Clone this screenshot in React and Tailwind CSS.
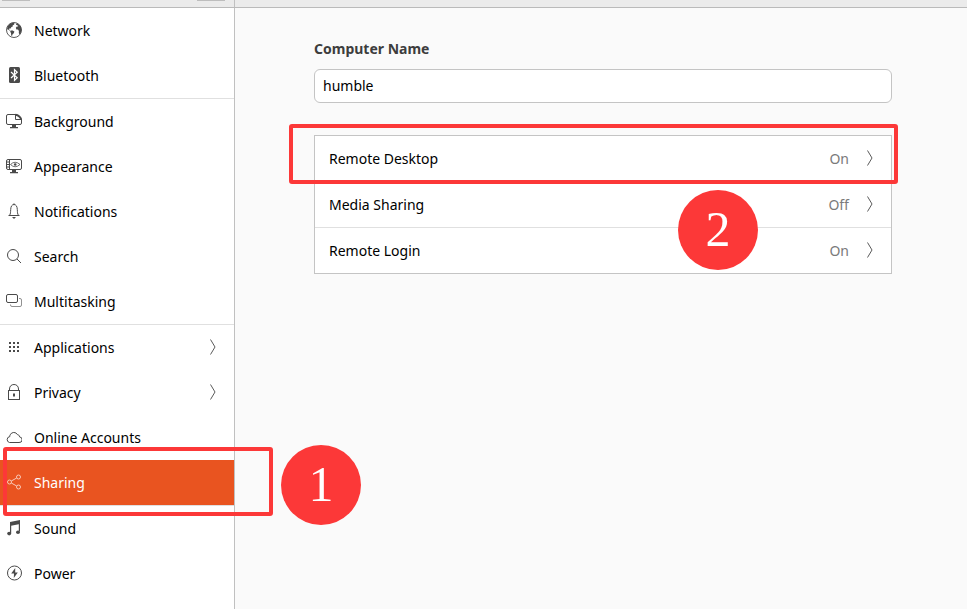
import React from "react";

function Glyph({ children }) {
  return (
    <svg
      className="mb-px size-4 shrink-0"
      viewBox="0 0 16 16"
      fill="none"
      stroke="currentColor"
      strokeWidth="1"
      aria-hidden="true"
    >
      {children}
    </svg>
  );
}

const icons = {
  network: (
    <Glyph>
      <circle cx="8" cy="8" r="7.5" strokeWidth="0.9" />
      <path
        stroke="none"
        fill="currentColor"
        d="M1.500 4.600 3.600 1.900 6.400.7 8.400 1 8.200 2.400 6.600 3.400 6.800 4.400 5.400 5 4.600 6.400 3.200 6.600 3 7.600 4.200 8.200 3.400 8.600 1.800 7.200 1 7.400ZM4.600 8.400 6.600 8.400 8.400 9.600 7.800 11.200 6.600 12.200 6 14 5.200 13.400 5 11 4.200 9.800ZM10.400 1.200 13 2.400 14.800 4.600 15.500 8 14.900 10.400 13.400 12.400 12.800 11 12.900 9 12 7.600 10.400 7.400 9.800 5.800 10.800 4.600 12.200 4.400 11.800 3.400 10 2.800Z"
      />
    </Glyph>
  ),
  bluetooth: (
    <Glyph>
      <rect x="3" y="0" width="11" height="16" rx="1.5" fill="currentColor" stroke="none" />
      <path stroke="#fff" strokeWidth="1.200" d="M5 5 11.200 10.800 8.500 13.400V2.600L11.200 5.200 5 11" />
    </Glyph>
  ),
  background: (
    <Glyph>
      <path d="M10 1.500H2A1.500 1.500 0 0 0 .5 3v7A1.500 1.500 0 0 0 2 11.500h12a1.500 1.500 0 0 0 1.500-1.500V6.500" />
      <path stroke="none" fill="currentColor" d="M6 12h4v2h2v1.200H4V14h2Z" />
      <path d="M9.500 1.500v5h6" />
      <path strokeWidth="2" d="M9.500 1.800C12.200 2 15 4.200 15.200 7" />
    </Glyph>
  ),
  appearance: (
    <Glyph>
      <path d="M2 1.500h12A1.500 1.500 0 0 1 15.500 3v7a1.500 1.500 0 0 1-1.500 1.500H2A1.500 1.500 0 0 1 .5 10V3A1.500 1.500 0 0 1 2 1.500ZM3.500 1.500v10M.5 4h3M.5 6.500h3M.5 9h3" />
      <path strokeWidth="0.800" d="M4.500 6.500Q9 2 14 6.500 9 11 4.500 6.500Z" />
      <circle cx="9.200" cy="6.500" r="1.300" fill="currentColor" stroke="none" />
      <path stroke="none" fill="currentColor" d="M6 12h4v2h2v1.200H4V14h2Z" />
    </Glyph>
  ),
  notifications: (
    <Glyph>
      <path d="M2.500 12.500h11M3.500 12.500c1.200-2 1-3.200 1.200-6C4.800 3.400 6 1.500 8 1.500s3.200 1.900 3.300 5c.2 2.800 0 4 1.200 6" />
      <path stroke="none" fill="currentColor" d="M7.400.5h1.200v1H7.400ZM6 14h4L8 16Z" />
    </Glyph>
  ),
  search: (
    <Glyph>
      <circle cx="7" cy="7" r="5.500" />
      <path d="m11 11 4 4" />
    </Glyph>
  ),
  multitasking: (
    <Glyph>
      <rect x=".5" y="1.500" width="11" height="8" rx="1.500" />
      <path opacity=".6" d="M13 5.500h1A1.500 1.500 0 0 1 15.500 7v5A1.500 1.500 0 0 1 14 13.500H6A1.500 1.500 0 0 1 4.500 12v-.5" />
    </Glyph>
  ),
  applications: (
    <Glyph>
      <path strokeWidth="2" strokeDasharray="2 2" d="M3 4h10M3 8h10M3 12h10" />
    </Glyph>
  ),
  privacy: (
    <Glyph>
      <rect x="2.500" y="6.500" width="11" height="9" />
      <path d="M3.500 6.500V5C3.500 2.200 5.500.5 8 .5S12.500 2.200 12.500 5v1.500" />
      <path strokeWidth="2" d="M8 9.500v3" />
    </Glyph>
  ),
  accounts: (
    <Glyph>
      <path d="M3.500 13.500h9.500a2.800 2.800 0 0 0 .6-5.600C13.300 6.300 12.400 5.600 11.400 5.600A4 4 0 0 0 4.200 5.800C3.700 6.600 3.700 7.200 3.800 7.600a3 3 0 0 0-.3 5.900Z" />
    </Glyph>
  ),
  sharing: (
    <Glyph>
      <circle cx="3.500" cy="8" r="2" />
      <circle cx="12.500" cy="3" r="2" />
      <circle cx="12.500" cy="13" r="2" />
      <path d="m5.300 7 5.400-3M5.300 9l5.400 3" />
    </Glyph>
  ),
  sound: (
    <Glyph>
      <path stroke="none" fill="currentColor" d="M4 2 14 0v4L5 5.800V13H4Z" />
      <path strokeWidth="1.200" d="M4.600 3v10M13.400 1v10.500" />
      <ellipse cx="3.200" cy="13.600" rx="2" ry="1.800" fill="currentColor" stroke="none" />
      <ellipse cx="12" cy="12.200" rx="2" ry="1.800" fill="currentColor" stroke="none" />
    </Glyph>
  ),
  power: (
    <Glyph>
      <circle cx="8.500" cy="8" r="7" />
      <path stroke="none" fill="currentColor" d="M9.200 3 5.200 8.600H8L7.800 13l4-5.600H9.200Z" />
    </Glyph>
  ),
};

const groups = [
  [
    ["network", "Network"],
    ["bluetooth", "Bluetooth"],
  ],
  [
    ["background", "Background"],
    ["appearance", "Appearance"],
    ["notifications", "Notifications"],
    ["search", "Search"],
    ["multitasking", "Multitasking"],
  ],
  [
    ["applications", "Applications", true],
    ["privacy", "Privacy", true],
    ["accounts", "Online Accounts"],
    ["sharing", "Sharing"],
  ],
  [
    ["sound", "Sound"],
    ["power", "Power"],
  ],
];

const services = [
  ["Remote Desktop", "On"],
  ["Media Sharing", "Off"],
  ["Remote Login", "On"],
];

function Chevron() {
  return (
    <svg className="mb-px h-4 w-2 shrink-0" viewBox="0 0 8 16" fill="none" stroke="#5a5a5a" aria-hidden="true">
      <path d="M1.500 .5 6 8l-4.500 7.500" />
    </svg>
  );
}

function Frame({ className }) {
  return (
    <span
      className={`pointer-events-none absolute z-10 rounded-[3px] border-4 border-[#fc3838] ${className}`}
    />
  );
}

function Step({ number, className }) {
  return (
    <span
      className={`pointer-events-none absolute z-10 flex size-20 items-center justify-center rounded-full bg-[#fc3838] font-['Liberation_Serif',serif] text-[50px] text-white ${className}`}
    >
      {number}
    </span>
  );
}

function NavItem({ icon, label, more }) {
  const active = icon === "sharing";
  return (
    <li className="relative">
      <a
        href={`#${icon}`}
        aria-current={active ? "page" : undefined}
        className={`flex h-[45px] items-center pr-[17px] pl-1.5 ${active ? "bg-[#e95420] text-white" : "bg-white text-black"}`}
      >
        <span className={`mr-3 ${active ? "text-[#f9c9b8]" : "text-[#4a4a4a]"}`}>{icons[icon]}</span>
        <span className="flex-1">{label}</span>
        {more && <Chevron />}
      </a>
      {active && (
        <>
          <Frame className="-top-[13px] left-[3px] h-[69px] w-[270px]" />
          <Step number="1" className="-top-[15px] left-[281px]" />
        </>
      )}
    </li>
  );
}

export default function App() {
  return (
    <div className="flex min-h-screen flex-col bg-[#fafafa] font-['Noto_Sans',sans-serif] text-sm text-black">
      <header className="flex h-2 border-b border-[#bababa] bg-[#ebebeb]">
        <div className="flex w-[235px] items-start justify-between border-r border-[#c0c0c0] pr-[9px] pl-0.5">
          <span className="h-px w-7 bg-[#bdbdbd]" />
          <span className="h-px w-7 bg-[#bdbdbd]" />
        </div>
      </header>
      <div className="flex flex-1">
        <nav className="w-[235px] shrink-0 border-r border-[#c0c0c0] bg-white" aria-label="Settings">
          {groups.map((items, i) => (
            <ul key={i} className="border-[#e0e0e0] not-last:border-b">
              {items.map(([icon, label, more]) => (
                <NavItem key={icon} icon={icon} label={label} more={more} />
              ))}
            </ul>
          ))}
        </nav>
        <main className="min-w-0 flex-1 pt-[31px] pr-[75px] pl-[79px]">
          <label htmlFor="computer-name" className="block leading-5 font-bold text-[#3d3d3d]">
            Computer Name
          </label>
          <input
            id="computer-name"
            type="text"
            defaultValue="humble"
            className="mt-2.5 block h-[34px] w-full rounded-md border border-[#c4c4c4] bg-white px-2 pb-0.5 outline-none"
          />
          <ul className="relative mt-8 divide-y divide-[#e0e0e0] border border-[#c4c4c4] bg-white">
            {services.map(([name, state], i) => (
              <li key={name} className="relative">
                <button type="button" className="flex h-[45px] w-full items-center pr-[17px] pl-3.5 text-left">
                  <span className="flex-1">{name}</span>
                  <span className="mr-[17px] text-[#7a7a7a]">{state}</span>
                  <Chevron />
                </button>
                {i === 0 && <Frame className="-top-3 -right-[7px] -bottom-[3px] -left-[26px]" />}
                {i === 1 && <Step number="2" className="top-2 right-[133px]" />}
              </li>
            ))}
          </ul>
        </main>
      </div>
    </div>
  );
}
